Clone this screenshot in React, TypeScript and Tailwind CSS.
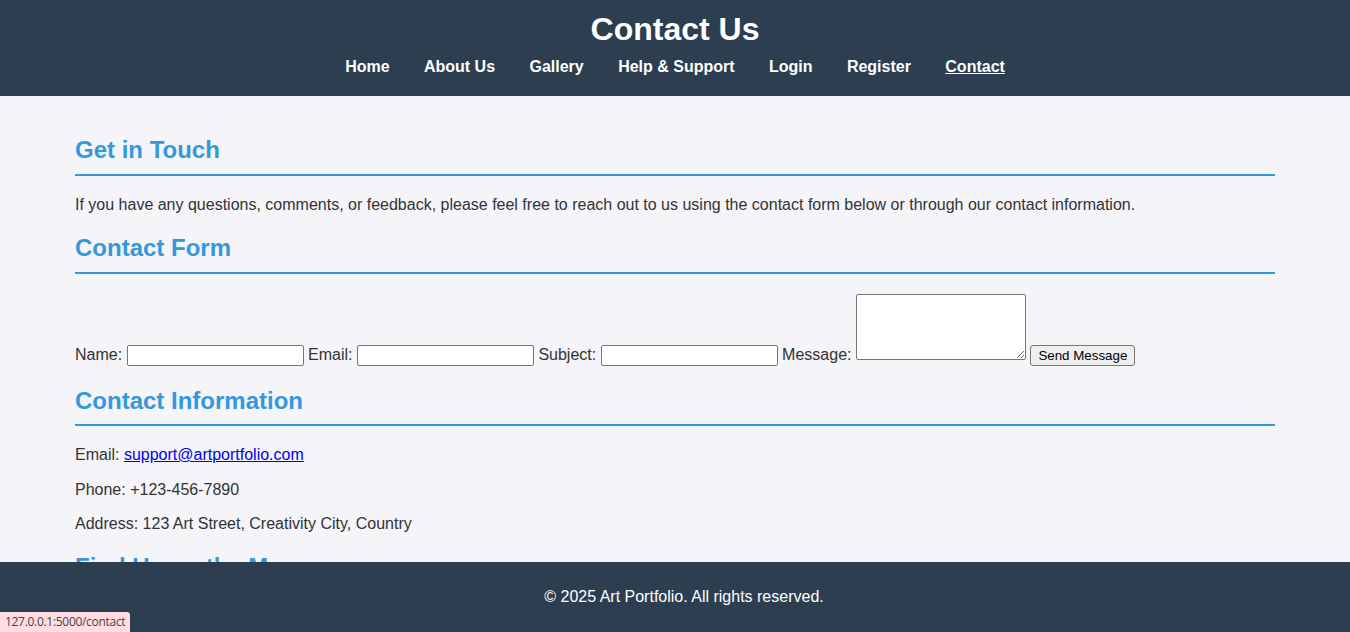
import React from 'react';

const navLinks = ['Home', 'About Us', 'Gallery', 'Help & Support', 'Login', 'Register', 'Contact'];

function SectionTitle({ children }: { children: React.ReactNode }) {
  return (
    <h2 className="text-[24px] leading-[27.6px] font-bold text-[#3498db] border-b-2 border-[#3498db] pb-[10px] mt-[20px] mb-[20px]">
      {children}
    </h2>
  );
}

const inputCls =
  'inline-block align-baseline w-[177px] h-[21px] px-[2px] py-[1px] bg-white border border-[#767676] rounded-[2px] text-[13.33px] text-black';

export default function App() {
  return (
    <div className="min-h-screen bg-[#f4f4f9] text-[#333] text-[16px] leading-[18.4px] font-['Liberation_Sans',Arial,sans-serif]">
      <header className="bg-[#2c3e50] text-white text-center h-[96px] pt-[11px]">
        <h1 className="text-[32px] leading-[37px] font-bold">Contact Us</h1>
        <nav className="mt-[10px] flex justify-center gap-[34.4px]">
          {navLinks.map((l) => (
            <a key={l} href="#" className={`font-bold text-white ${l === 'Contact' ? 'underline' : ''}`}>
              {l}
            </a>
          ))}
        </nav>
      </header>

      <main className="max-w-[1200px] mx-auto pt-[20px] pb-[120px]">
        <SectionTitle>Get in Touch</SectionTitle>
        <p>
          If you have any questions, comments, or feedback, please feel free to reach out to us using the contact form
          below or through our contact information.
        </p>

        <SectionTitle>Contact Form</SectionTitle>
        <form className="leading-[18.4px] pb-[1px]" onSubmit={(e) => e.preventDefault()}>
          <label>Name:</label> <input type="text" className={inputCls} /> <label>Email:</label>{' '}
          <input type="email" className={inputCls} /> <label>Subject:</label> <input type="text" className={inputCls} />{' '}
          <label>Message:</label>{' '}
          <textarea className="inline-block align-baseline w-[170px] h-[66px] bg-white border border-[#767676] rounded-[2px] p-[2px] text-[13.33px]" />{' '}
          <button
            type="submit"
            className="inline-block align-baseline h-[21px] px-[7px] bg-[#efefef] border border-[#767676] rounded-[3px] text-[13.33px] leading-[15px] text-black"
          >
            Send Message
          </button>
        </form>

        <SectionTitle>Contact Information</SectionTitle>
        <p>
          Email:{' '}
          <a href="#" className="text-[#0000ee] underline">
            support@artportfolio.com
          </a>
        </p>
        <p className="mt-[16px]">Phone: +123-456-7890</p>
        <p className="mt-[16px]">Address: 123 Art Street, Creativity City, Country</p>

        <SectionTitle>Find Us on the Map</SectionTitle>
        <div className="h-[300px] bg-[#e5e7eb]" />
      </main>

      <footer className="fixed bottom-0 left-0 right-0 h-[70px] bg-[#2c3e50] text-white flex items-center justify-center pl-[18px]">
        <p>© 2025 Art Portfolio. All rights reserved.</p>
      </footer>

      <div className="fixed bottom-0 left-0 h-[20px] w-[130px] bg-[#ffdde3] rounded-tr-[3px] text-[12px] leading-[20px] text-[#444] pl-[5px] font-['Open_Sans',sans-serif] tracking-[-0.3px]">
        127.0.0.1:5000/contact
      </div>
    </div>
  );
}
